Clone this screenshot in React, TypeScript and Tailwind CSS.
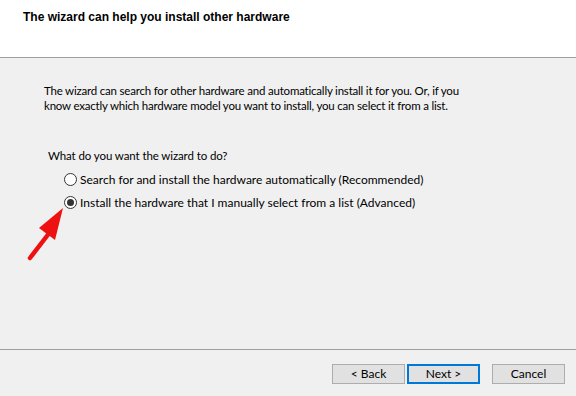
import React from "react";

export default function App() {
  const font = { fontFamily: 'Lato, "Noto Sans", sans-serif' };
  return (
    <div className="w-[576px] h-[396px] flex flex-col bg-[#f0f0f0] text-[12px] text-black overflow-hidden" style={font}>
      <div className="h-[58px] bg-white border-b border-[#a0a0a0] pl-[23px] pt-[7px]">
        <div className="font-bold text-[12px] leading-[20px]" style={{ fontFamily: '"Liberation Sans", Arial, sans-serif' }}>
          The wizard can help you install other hardware
        </div>
      </div>
      <div className="flex-1 pl-[44px] pt-[25px] relative">
        <p className="leading-[15px] whitespace-nowrap text-[11.5px] tracking-[-0.2px]">
          The wizard can search for other hardware and automatically install it for you. Or, if you
        </p>
        <p className="leading-[15px] whitespace-nowrap text-[11.5px] tracking-[-0.2px]">
          know exactly which hardware model you want to install, you can select it from a list.
        </p>
        <p className="leading-[15px] mt-[35px] pl-[4px] text-[11.5px] tracking-[-0.1px]">What do you want the wizard to do?</p>
        <div className="mt-[9px] pl-[20px] flex flex-col gap-[8px]">
          <div className="flex items-center gap-[3px] leading-[15px]">
            <span className="w-[13px] h-[13px] rounded-full border border-[#333] bg-white shrink-0" />
            <span>Search for and install the hardware automatically (Recommended)</span>
          </div>
          <div className="flex items-center gap-[3px] leading-[15px]">
            <span className="w-[13px] h-[13px] rounded-full border border-[#333] bg-white flex items-center justify-center shrink-0">
              <span className="w-[7px] h-[7px] rounded-full bg-[#333]" />
            </span>
            <span>Install the hardware that I manually select from a list (Advanced)</span>
          </div>
        </div>
        <svg className="absolute left-[24px] top-[147px]" width="50" height="60" viewBox="0 0 50 60">
          <line x1="6" y1="53" x2="26" y2="27" stroke="#ee1111" strokeWidth="4.5" strokeLinecap="round" />
          <polygon points="39,3 15,23 31,35" fill="#ee1111" />
        </svg>
      </div>
      <div className="h-[47px] border-t border-[#a0a0a0] flex justify-end items-start pt-[14px] pr-[11px]">
        <button className="w-[73px] h-[20px] bg-[#e1e1e1] border border-[#adadad] text-[12px] leading-[18px]">&lt; Back</button>
        <button className="ml-[2px] w-[73px] h-[20px] bg-[#e1e1e1] border-2 border-[#0078d7] text-[12px] leading-[16px]">Next &gt;</button>
        <button className="ml-[12px] w-[73px] h-[20px] bg-[#e1e1e1] border border-[#adadad] text-[12px] leading-[18px]">Cancel</button>
      </div>
    </div>
  );
}
